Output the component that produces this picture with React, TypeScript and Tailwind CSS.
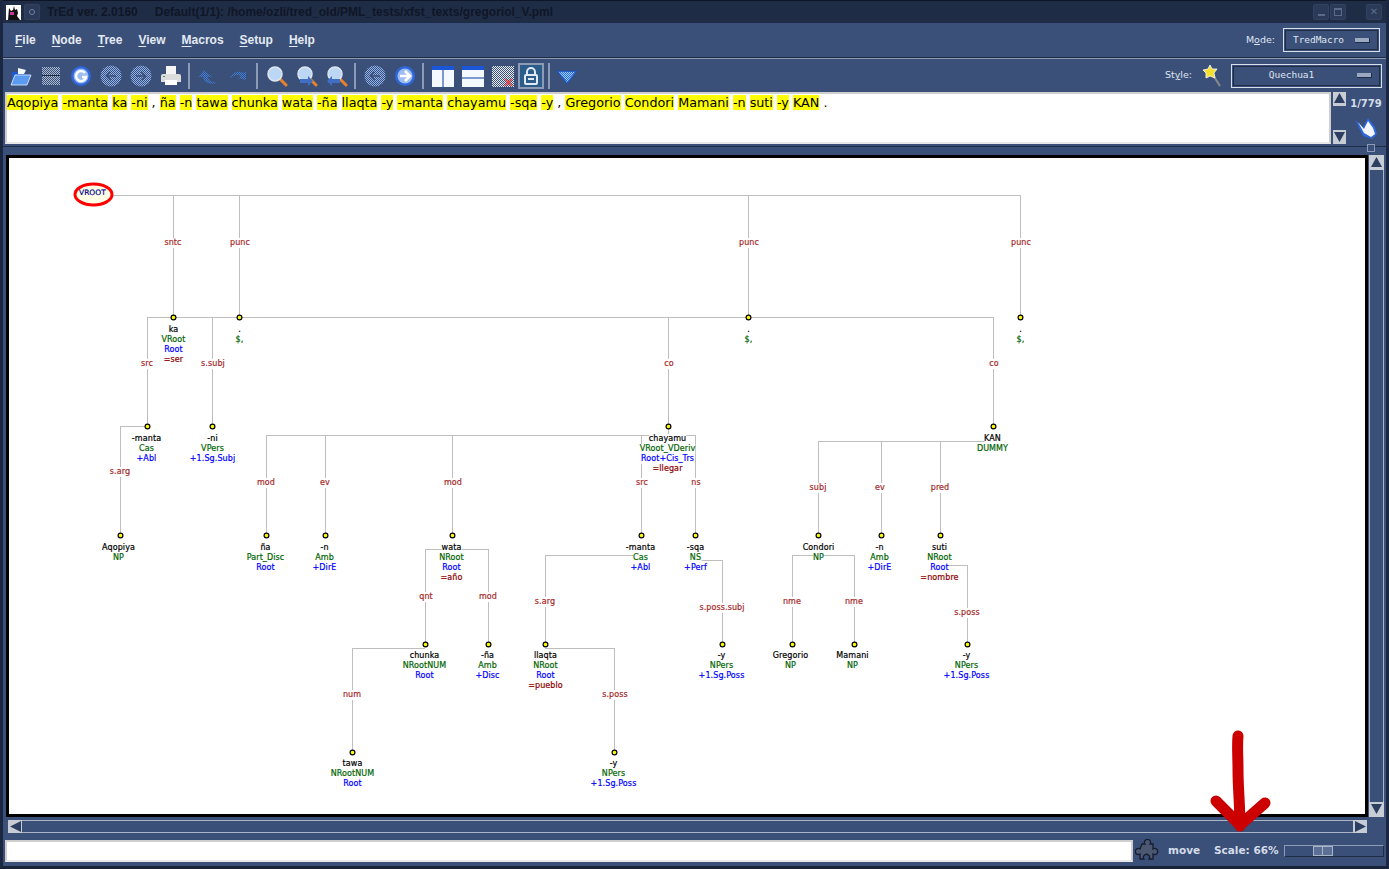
import type { ReactNode } from "react";

const SENTENCE = "Aqopiya -manta ka -ni , ña -n tawa chunka wata -ña llaqta -y -manta chayamu -sqa -y , Gregorio Condori Mamani -n suti -y KAN .".split(" ");
const MENUS = ["File", "Node", "Tree", "View", "Macros", "Setup", "Help"];

const G = "#006400";
const B = "#0000ff";
const R = "#8b0000";

type TreeNode = { x: number; y: number; lines: [string, string][]; tx?: number };

const NODES: TreeNode[] = [
  { x: 173, y: 317, tx: 173, lines: [["ka", "#000"], ["VRoot", G], ["Root", B], ["=ser", R]] },
  { x: 239, y: 317, lines: [[".", "#000"], ["$,", G]] },
  { x: 748, y: 317, lines: [[".", "#000"], ["$,", G]] },
  { x: 1020, y: 317, lines: [[".", "#000"], ["$,", G]] },
  { x: 147, y: 426, tx: 146, lines: [["-manta", "#000"], ["Cas", G], ["+Abl", B]] },
  { x: 212, y: 426, lines: [["-ni", "#000"], ["VPers", G], ["+1.Sg.Subj", B]] },
  { x: 668, y: 426, tx: 667, lines: [["chayamu", "#000"], ["VRoot_VDeriv", G], ["Root+Cis_Trs", B], ["=llegar", R]] },
  { x: 993, y: 426, tx: 992, lines: [["KAN", "#000"], ["DUMMY", G]] },
  { x: 120, y: 535, tx: 118, lines: [["Aqopiya", "#000"], ["NP", G]] },
  { x: 266, y: 535, tx: 265, lines: [["ña", "#000"], ["Part_Disc", G], ["Root", B]] },
  { x: 325, y: 535, tx: 324, lines: [["-n", "#000"], ["Amb", G], ["+DirE", B]] },
  { x: 452, y: 535, tx: 451, lines: [["wata", "#000"], ["NRoot", G], ["Root", B], ["=año", R]] },
  { x: 641, y: 535, tx: 640, lines: [["-manta", "#000"], ["Cas", G], ["+Abl", B]] },
  { x: 695, y: 535, lines: [["-sqa", "#000"], ["NS", G], ["+Perf", B]] },
  { x: 818, y: 535, lines: [["Condori", "#000"], ["NP", G]] },
  { x: 881, y: 535, tx: 879, lines: [["-n", "#000"], ["Amb", G], ["+DirE", B]] },
  { x: 940, y: 535, tx: 939, lines: [["suti", "#000"], ["NRoot", G], ["Root", B], ["=nombre", R]] },
  { x: 425, y: 644, tx: 424, lines: [["chunka", "#000"], ["NRootNUM", G], ["Root", B]] },
  { x: 488, y: 644, tx: 487, lines: [["-ña", "#000"], ["Amb", G], ["+Disc", B]] },
  { x: 545, y: 644, lines: [["llaqta", "#000"], ["NRoot", G], ["Root", B], ["=pueblo", R]] },
  { x: 722, y: 644, tx: 721, lines: [["-y", "#000"], ["NPers", G], ["+1.Sg.Poss", B]] },
  { x: 792, y: 644, tx: 790, lines: [["Gregorio", "#000"], ["NP", G]] },
  { x: 854, y: 644, tx: 852, lines: [["Mamani", "#000"], ["NP", G]] },
  { x: 967, y: 644, tx: 966, lines: [["-y", "#000"], ["NPers", G], ["+1.Sg.Poss", B]] },
  { x: 352, y: 752, lines: [["tawa", "#000"], ["NRootNUM", G], ["Root", B]] },
  { x: 614, y: 752, tx: 613, lines: [["-y", "#000"], ["NPers", G], ["+1.Sg.Poss", B]] },
];

// parent x, bus y, child xs, child y
const EDGES: [number, number, number[], number][] = [
  [113, 195, [173, 239, 748, 1020], 317],
  [173, 317, [147, 212, 668, 993], 426],
  [147, 426, [120], 535],
  [668, 435, [266, 325, 452, 641, 695], 535],
  [993, 441, [818, 881, 940], 535],
  [452, 549, [425, 488], 644],
  [641, 555, [545], 644],
  [695, 560, [722], 644],
  [818, 555, [792, 854], 644],
  [940, 565, [967], 644],
  [425, 648, [352], 752],
  [545, 648, [614], 752],
];

const EDGE_LABELS: [string, number, number][] = [
  ["sntc", 173, 243], ["punc", 240, 243], ["punc", 749, 243], ["punc", 1021, 243],
  ["src", 147, 364], ["s.subj", 213, 364], ["co", 669, 364], ["co", 994, 364],
  ["s.arg", 120, 472],
  ["mod", 266, 483], ["ev", 325, 483], ["mod", 453, 483], ["src", 642, 483], ["ns", 696, 483],
  ["subj", 818, 488], ["ev", 880, 488], ["pred", 940, 488],
  ["qnt", 426, 597], ["mod", 488, 597], ["s.arg", 545, 602], ["s.poss.subj", 722, 608],
  ["nme", 792, 602], ["nme", 854, 602], ["s.poss", 967, 613],
  ["num", 352, 695], ["s.poss", 615, 695],
];

function Dither({ id, color = "#c9d6ee" }: { id: string; color?: string }) {
  return (
    <pattern id={id} width="2" height="2" patternUnits="userSpaceOnUse">
      <rect width="1" height="1" fill={color} />
      <rect x="1" y="1" width="1" height="1" fill={color} />
    </pattern>
  );
}

function Icon({ children, w = 22 }: { children: ReactNode; w?: number }) {
  return (
    <svg width={w} height="22" viewBox={`0 0 ${w} 22`} className="shrink-0">
      {children}
    </svg>
  );
}

function Globe({ children }: { children: ReactNode }) {
  return (
    <Icon>
      <circle cx="11" cy="11" r="10" fill="#2f66dc" />
      <circle cx="11" cy="11" r="7.5" fill="#9dbcf0" />
      {children}
    </Icon>
  );
}

function DitherGlobe({ id, dir }: { id: string; dir: "l" | "r" }) {
  return (
    <Icon>
      <defs>
        <Dither id={id} color="#8fb2ee" />
      </defs>
      <circle cx="11" cy="11" r="10.5" fill={`url(#${id})`} />
      <path d={dir === "l" ? "M16 11H7M10.5 7 6.5 11l4 4" : "M6 11h9M11.5 7l4 4-4 4"} stroke="#3b5078" strokeWidth="1.5" fill="none" />
    </Icon>
  );
}

function Magnifier({ arrow }: { arrow?: "in" | "out" }) {
  return (
    <Icon>
      <path d="M14 14l6 6" stroke="#e8822a" strokeWidth="3" strokeLinecap="round" />
      <circle cx="9" cy="9" r="7" fill="#bcd6f5" stroke="#dfe6f0" strokeWidth="1.5" />
      {arrow === "in" && <path d="M4 14h8v-3l5 5-5 5v-3H4z" fill="#3f6ec4" />}
      {arrow === "out" && <path d="M14 14H6v-3l-5 5 5 5v-3h8z" fill="#3f6ec4" />}
    </Icon>
  );
}

function WindowIcon({ kind }: { kind: "cols" | "rows" }) {
  return (
    <Icon>
      <rect x="0" y="1" width="22" height="21" fill="#f4f8ff" />
      <rect x="0" y="1" width="22" height="4" fill="#1c56d8" />
      {kind === "cols" ? <rect x="10" y="5" width="2" height="17" fill="#7c9ad0" /> : <rect x="0" y="12" width="22" height="2" fill="#7c9ad0" />}
    </Icon>
  );
}

function Sep() {
  return <div className="-ml-[2px] h-[26px] w-[2px] shrink-0 bg-[#8c9ab5]" />;
}

function ScrollBtn({ dir, className = "" }: { dir: "u" | "d" | "l" | "r"; className?: string }) {
  const pts = { u: "1,11 6.5,1 12,11", d: "1,1 6.5,11 12,1", l: "12,1 1,6.5 12,12", r: "1,1 12,6.5 1,12" }[dir];
  return (
    <div className={`flex h-[13px] w-[13px] shrink-0 items-center justify-center bg-[#c8ccd4] ${className}`}>
      <svg width="13" height="13" viewBox="0 0 13 13">
        <polygon points={pts} fill="#2c3f62" />
      </svg>
    </div>
  );
}

function Combo({ label, width, center }: { label: string; width: string; center?: boolean }) {
  return (
    <div className={`flex h-[24px] items-center border border-[#d8deea] p-px ${width}`}>
      <div className="flex h-full w-full items-center border border-[#1f2c46] pl-[7px] pr-[7px]">
        <span className={`font-['DejaVu_Sans_Mono',monospace] text-[9.5px] tracking-[-0.05px] text-[#dfe6f2] ${center ? "flex-1 pr-[15px] text-center" : "flex-1"}`}>{label}</span>
        <div className="h-[5px] w-[15px] border-b border-r border-b-[#1f2c46] border-r-[#1f2c46] bg-[#9aa8c0]" />
      </div>
    </div>
  );
}

function TreeCanvas() {
  return (
    <div className="relative h-[662px] min-w-0 flex-1 border-[3px] border-black bg-white font-['DejaVu_Sans',sans-serif] [-webkit-text-stroke:0.2px_currentColor]">
      {/* the tree is drawn in page coordinates, shifted by the canvas origin */}
      <div className="absolute left-[-9px] top-[-158px] h-[869px] w-[1389px]">
        <svg width="1389" height="869" className="absolute left-0 top-0">
          {EDGES.map(([px, y, kids, ky], i) => {
            const xs = [px, ...kids];
            return (
              <g key={i} stroke="#bebebe" strokeWidth="1" shapeRendering="crispEdges">
                <line x1={Math.min(...xs)} x2={Math.max(...xs)} y1={y + 0.5} y2={y + 0.5} />
                {kids.map((k) => (
                  <line key={k} x1={k + 0.5} x2={k + 0.5} y1={y} y2={ky} />
                ))}
              </g>
            );
          })}
          <line x1="668.5" x2="668.5" y1="426" y2="435" stroke="#bebebe" />
          <ellipse cx="93.5" cy="194.5" rx="18.5" ry="10.5" fill="#ffffe8" stroke="#ff0000" strokeWidth="3" />
          {NODES.map((n) => (
            <circle key={`${n.x}-${n.y}`} cx={n.x + 0.5} cy={n.y + 0.5} r="2.4" fill="#ffff00" stroke="#000" strokeWidth="1.2" />
          ))}
        </svg>
        <div className="absolute left-[79px] top-[188px] text-[7.5px] leading-[10px] text-[#00008b]">VROOT</div>
        {EDGE_LABELS.map(([t, x, y], i) => (
          <div key={i} className="absolute -translate-x-1/2 whitespace-nowrap bg-white text-[8px] leading-[10px] tracking-[0.1px] text-[#a52a2a]" style={{ left: x, top: y - 5 }}>
            {t}
          </div>
        ))}
        {NODES.map((n) => (
          <div key={`${n.x}-${n.y}-t`} className="absolute flex -translate-x-1/2 flex-col items-center" style={{ left: (n.tx ?? n.x) + 0.5, top: n.y + (n.y < 600 ? 8 : 7) }}>
            {n.lines.map(([t, c], i) => (
              <div key={i} className="whitespace-nowrap bg-white text-[8px] leading-[10px] tracking-[0.1px]" style={{ color: c }}>
                {t}
              </div>
            ))}
          </div>
        ))}
      </div>
    </div>
  );
}

export default function App() {
  return (
    <div className="relative flex h-[869px] w-[1389px] flex-col overflow-hidden border-x-[3px] border-b-[3px] border-x-[#1b2740] border-b-[#18233a] bg-[#3b5078] font-['DejaVu_Sans',sans-serif]">
      {/* title bar */}
      <div className="-mx-[3px] flex h-[23px] shrink-0 items-center border-t border-[#0d1526] bg-[#1f2c46] pl-[6px]">
        <svg width="15" height="15" viewBox="0 0 15 15" className="shrink-0">
          <rect width="15" height="15" fill="#fff" />
          <path d="M2 15 3 3l2 3 2-1 1-4 1 4 2-1 1 4-1 3 3 4z" fill="#111" />
          <path d="M4 7h4v3H4z" fill="#c8389a" />
        </svg>
        <div className="ml-[3px] flex h-[16px] w-[16px] items-center justify-center rounded-[2px] border border-[#33435f] bg-[#2a3a58]">
          <div className="h-[6px] w-[6px] rounded-full border border-[#6f82a5]" />
        </div>
        <span className="ml-[7px] whitespace-nowrap font-['Liberation_Sans',sans-serif] text-[12px] font-bold text-[#0f1626]">TrEd ver. 2.0160</span>
        <span className="ml-[17px] whitespace-nowrap font-['Liberation_Sans',sans-serif] text-[12px] font-bold text-[#0f1626]">Default(1/1): /home/ozli/tred_old/PML_tests/xfst_texts/gregoriol_V.pml</span>
        <div className="ml-auto flex items-center pr-[7px]">
          <div className="flex h-[16px] w-[16px] items-end justify-center rounded-[2px] border border-[#33435f] bg-[#2a3a58] pb-[3px]">
            <div className="h-[2px] w-[7px] bg-[#5b6b87]" />
          </div>
          <div className="ml-px flex h-[16px] w-[16px] items-center justify-center rounded-[2px] border border-[#33435f] bg-[#2a3a58]">
            <div className="h-[8px] w-[8px] border border-t-2 border-[#5b6b87]" />
          </div>
          <div className="ml-[20px] flex h-[16px] w-[16px] items-center justify-center rounded-[2px] border border-[#33435f] bg-[#2a3a58] text-[10px] font-bold leading-none text-[#5b6b87]">✕</div>
        </div>
      </div>

      {/* menu */}
      <div className="flex h-[35px] shrink-0 items-center justify-between border-b border-[#1f2c46] pl-[12px] pr-[6px]">
        <div className="flex gap-[16px]">
          {MENUS.map((m) => (
            <span key={m} className="font-['Liberation_Sans',sans-serif] text-[12px] font-bold text-[#e4eaf4]">
              <span className="underline underline-offset-2">{m[0]}</span>
              {m.slice(1)}
            </span>
          ))}
        </div>
        <div className="flex items-center gap-[8px]">
          <span className="text-[9.5px] text-[#dfe6f2]">
            M<span className="underline">o</span>de:
          </span>
          <Combo label="TredMacro" width="w-[97px]" />
        </div>
      </div>

      {/* toolbar */}
      <div className="flex h-[34px] shrink-0 items-center border-t border-[#8c9ab5] pl-[7px] pr-[4px]">
        <div className="flex items-center gap-[8px]">
          <Icon>
            <path d="M2 7h7l2 2h6v10H2z" fill="#1d5bd0" />
            <path d="M8 3l8 2-2 4H8z" fill="#f4f8ff" />
            <path d="M5 10h16l-4 10H1z" fill="#5a9af0" stroke="#eaf2ff" strokeWidth="0.8" />
          </Icon>
          <Icon>
            <defs>
              <Dither id="save" color="#aab8d2" />
            </defs>
            <rect x="2" y="2" width="18" height="18" fill="url(#save)" />
            <rect x="2" y="10" width="18" height="1" fill="#1f2c46" />
          </Icon>
          <Globe>
            <path d="M15 8a5 5 0 1 0 1 4h-4" stroke="#fff" strokeWidth="2.4" fill="none" />
          </Globe>
          <DitherGlobe id="gl1" dir="l" />
          <DitherGlobe id="gl2" dir="r" />
          <Icon>
            <rect x="6" y="1" width="10" height="8" fill="#f4f4f4" />
            <path d="M3 9h16a2 2 0 0 1 2 2v6H1v-6a2 2 0 0 1 2-2z" fill="#dcdcdc" />
            <rect x="5" y="15" width="12" height="5" fill="#fff" />
            <rect x="3" y="11" width="2" height="1" fill="#3ca03c" />
          </Icon>
          <Sep />
          <Icon>
            <defs>
              <Dither id="undo" color="#3d7fe0" />
            </defs>
            <path d="M6 5 1 12h4c1 5 6 8 14 6-6-1-9-3-9-6h4z" fill="url(#undo)" />
          </Icon>
          <Icon>
            <path d="M2 14c2-7 9-9 13-6l3-1v8l-8-2 3-2c-3-2-8-1-11 3z" fill="url(#undo)" />
          </Icon>
          <Sep />
          <Magnifier />
          <Magnifier arrow="in" />
          <Magnifier arrow="out" />
          <Sep />
          <DitherGlobe id="gl3" dir="l" />
          <Globe>
            <path d="M6 11h9M11 6l5 5-5 5" stroke="#fff" strokeWidth="2.6" fill="none" />
          </Globe>
          <Sep />
          <WindowIcon kind="cols" />
          <WindowIcon kind="rows" />
          <Icon>
            <defs>
              <Dither id="win" color="#e8ecf4" />
            </defs>
            <rect x="0" y="1" width="22" height="21" fill="url(#win)" />
            <path d="M13 14l7 7M20 14l-7 7" stroke="#e03030" strokeWidth="1.5" />
          </Icon>
          <div className="-ml-[4px] -mr-[2px] flex h-[26px] w-[26px] items-center justify-center border-2 border-[#8c9ab5] bg-[#2b5c8a]">
            <svg width="16" height="18" viewBox="0 0 16 18">
              <path d="M4 8V5a4 4 0 0 1 8 0v3" stroke="#dfeaf5" strokeWidth="2" fill="none" />
              <rect x="2" y="8" width="12" height="9" rx="1" fill="none" stroke="#dfeaf5" strokeWidth="2" />
              <rect x="5" y="11" width="6" height="2" fill="#dfeaf5" />
            </svg>
          </div>
          <Sep />
          <div className="-ml-[2px]">
            <Icon>
              <defs>
                <Dither id="tri" color="#9ccaff" />
              </defs>
              <path d="M1 6h20L11 19z" fill="#2f6fd8" stroke="#1d4fb0" strokeWidth="0.8" />
              <path d="M3 7h16l-8 10z" fill="url(#tri)" />
            </Icon>
          </div>
        </div>
        <div className="ml-auto flex items-center">
          <span className="text-[9.5px] text-[#dfe6f2]">
            St<span className="underline">y</span>le:
          </span>
          <svg width="20" height="24" viewBox="0 0 20 24" className="ml-[10px]">
            <path d="M11 11l7 11" stroke="#8a8a8a" strokeWidth="2" />
            <path d="M8 1l2 4 5 0-3 4 1 5-5-2-4 2 0-5-3-3 5-1z" fill="#f5e030" stroke="#fff" strokeWidth="0.8" />
          </svg>
          <Combo label="Quechua1" width="w-[151px] ml-[9px]" center />
        </div>
      </div>

      {/* sentence */}
      <div className="flex h-[52px] shrink-0 pl-[2px]">
        <div className="min-w-0 flex-1 border-2 border-[#cfcfcf] border-b-[#e8e8e8] bg-white pt-[1px] font-['DejaVu_Sans',sans-serif] text-[12.75px] leading-[16px] text-black">
          {SENTENCE.map((w, i) => (
            <span key={i}>
              {w === "," || w === "." ? w : <span className="bg-[#ffff00]">{w}</span>}{" "}
            </span>
          ))}
        </div>
        <div className="ml-[2px] flex w-[13px] shrink-0 flex-col">
          <ScrollBtn dir="u" />
          <div className="flex-1 border-y border-[#c8ccd4] bg-[#3b5078]" />
          <ScrollBtn dir="d" />
        </div>
        <div className="flex w-[40px] shrink-0 flex-col items-center">
          <span className="mt-[4px] text-[10px] font-bold text-[#d4dcea]">1/779</span>
          <svg width="24" height="24" viewBox="0 0 24 24" className="mt-[6px]">
            <path d="M1 3l8 7 5-9 7 9 2 7-5 5-9-3z" fill="#2f66dc" />
            <path d="M4 5l6 7 4-8 5 7 2 6-4 3-7-4z" fill="#f4f7fd" />
          </svg>
        </div>
      </div>

      {/* sash */}
      <div className="relative mt-[2px] h-[9px] shrink-0 border-t border-[#1f2c46]">
        <div className="absolute right-[11px] top-[-3px] h-[8px] w-[8px] border border-[#8c9ab5] bg-[#3b5078]" />
      </div>

      {/* canvas */}
      <div className="flex shrink-0 pl-[3px] pr-[2px]">
        <TreeCanvas />
        <div className="ml-px flex w-[15px] shrink-0 flex-col">
          <ScrollBtn dir="u" className="h-[15px]! w-[15px]!" />
          <div className="flex-1 border-x border-[#aab4c8]" />
          <ScrollBtn dir="d" className="h-[15px]! w-[15px]!" />
        </div>
      </div>

      {/* horizontal scrollbar */}
      <div className="mt-[3px] flex h-[13px] shrink-0 pl-[5px] pr-[19px]">
        <ScrollBtn dir="l" className="w-[14px]!" />
        <div className="flex-1 border-y border-[#aab4c8]" />
        <ScrollBtn dir="r" className="w-[14px]!" />
      </div>

      {/* status */}
      <div className="mt-[7px] flex h-[22px] shrink-0 items-center pl-[2px]">
        <div className="h-[22px] w-[1128px] border-2 border-[#cfcfcf] border-b-[#e8e8e8] bg-white" />
        <svg width="24" height="24" viewBox="0 0 24 24" className="ml-[2px] shrink-0">
          <path d="M7 5h3a3 3 0 1 1 5 0h3v5a3 3 0 1 1 0 5v5h-4a3 3 0 1 0-5 0H5v-5a3 3 0 1 1 0-5z" fill="#4c5872" stroke="#151d30" strokeWidth="1.3" />
        </svg>
        <span className="ml-[9px] w-[31px] whitespace-nowrap text-[10.5px] font-bold text-[#d4dcea]">move</span>
        <span className="ml-[15px] whitespace-nowrap text-[10.5px] font-bold text-[#d4dcea]">Scale: 66%</span>
        <div className="ml-[5px] flex h-[12px] w-[100px] items-center justify-start border border-[#8c9ab5] border-b-[#1f2c46] border-r-[#1f2c46] pl-[28px]">
          <div className="flex h-[10px] w-[20px] border border-[#aab4c8] bg-[#5c6f94]">
            <div className="w-1/2 border-r border-[#aab4c8]" />
          </div>
        </div>
      </div>

      {/* hand-drawn red arrow over the scale */}
      <svg width="70" height="105" viewBox="0 0 70 105" className="pointer-events-none absolute left-[1202px] top-[728px]">
        <path d="M33 8c-1 10 0 20 0 34 0 18 2 36 2 56M11 73l24 24 25-22" stroke="#cc0000" strokeWidth="11" strokeLinecap="round" strokeLinejoin="round" fill="none" />
      </svg>
    </div>
  );
}
